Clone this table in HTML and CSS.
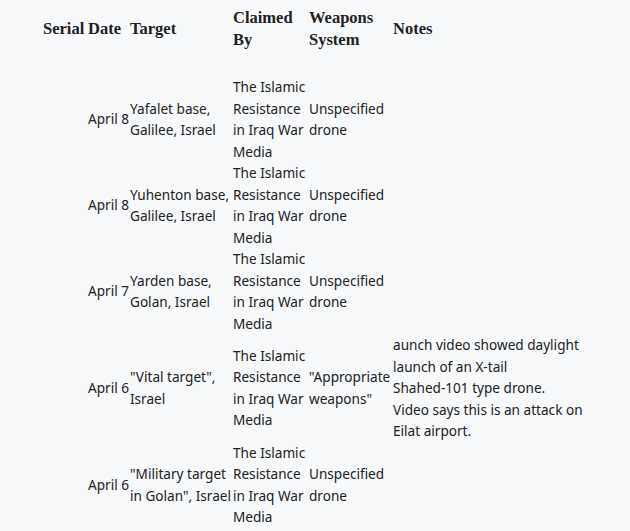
FILE: index.html
```html
<!DOCTYPE html>
<html>
<head>
<meta charset="utf-8">
<link rel="stylesheet" href="styles.css">
</head>
<body>
<table class="attacks">
  <colgroup>
    <col class="c-serial"><col class="c-date"><col class="c-target"><col class="c-claim"><col class="c-weapon"><col class="c-notes">
  </colgroup>
  <thead>
    <tr>
      <th>Serial</th><th>Date</th><th>Target</th><th>Claimed By</th><th>Weapons System</th><th>Notes</th>
    </tr>
  </thead>
  <tbody>
    <tr class="spacer"><td colspan="6"></td></tr>
    <tr>
      <td></td><td>April 8</td><td>Yafalet base, Galilee, Israel</td><td>The Islamic Resistance in Iraq War Media</td><td>Unspecified drone</td><td></td>
    </tr>
    <tr>
      <td></td><td>April 8</td><td>Yuhenton base, Galilee, Israel</td><td>The Islamic Resistance in Iraq War Media</td><td>Unspecified drone</td><td></td>
    </tr>
    <tr>
      <td></td><td>April 7</td><td>Yarden base, Golan, Israel</td><td>The Islamic Resistance in Iraq War Media</td><td>Unspecified drone</td><td></td>
    </tr>
    <tr>
      <td></td><td>April 6</td><td>"Vital target", Israel</td><td>The Islamic Resistance in Iraq War Media</td><td>"Appropriate weapons"</td><td>aunch video showed daylight launch of an X-tail <span class="nw">Shahed-101</span> type drone. Video says this is an attack on Eilat airport.</td>
    </tr>
    <tr>
      <td></td><td>April 6</td><td>"Military target in Golan", Israel</td><td>The Islamic Resistance in Iraq War Media</td><td>Unspecified drone</td><td></td>
    </tr>
  </tbody>
</table>
</body>
</html>
```
FILE: styles.css
```css
html, body {
  margin: 0;
  padding: 0;
  background: #f8f9fa;
}
body {
  color: #202122;
  font-family: "Noto Sans", "Liberation Sans", sans-serif;
  font-size: 13.6px;
  overflow: hidden;
}
.attacks {
  border-collapse: collapse;
  table-layout: fixed;
  width: 540px;
  margin: 7px 0 0 43px;
}
.c-serial { width: 45px; }
.c-date { width: 42px; }
.c-target { width: 103px; }
.c-claim { width: 76px; }
.c-weapon { width: 84px; }
.c-notes { width: 190px; }
.attacks th {
  font-family: "Liberation Serif", serif;
  font-weight: bold;
  font-size: 16.5px;
  line-height: 22px;
  text-align: left;
  vertical-align: middle;
  padding: 0;
}
.attacks td {
  padding: 0;
  line-height: 21.5px;
  vertical-align: middle;
}
.nw {
  white-space: nowrap;
}
.spacer td {
  height: 25px;
}
```
